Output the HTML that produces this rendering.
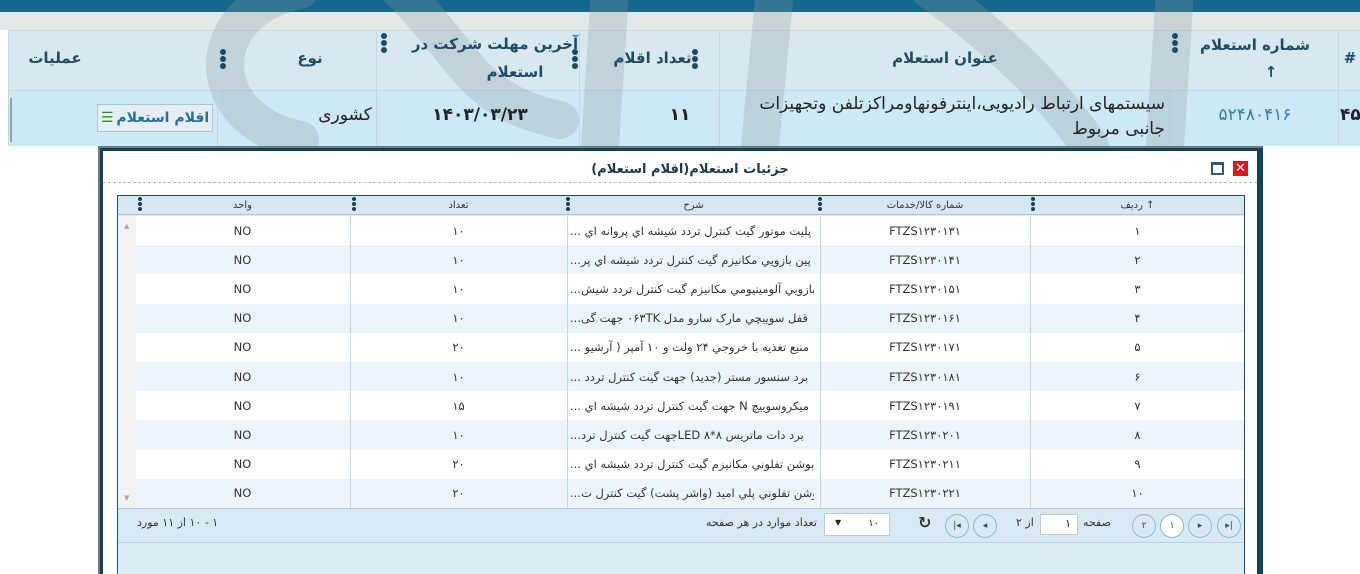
<!DOCTYPE html>
<html><head><meta charset="utf-8"><style>
*{margin:0;padding:0;box-sizing:border-box}
body{width:1360px;height:574px;overflow:hidden;background:#fff;font-family:"DejaVu Sans","Liberation Sans",sans-serif;position:relative;color:#222}
.a{position:absolute}
.c{position:absolute;display:flex;align-items:center;justify-content:center;text-align:center}
.dots{position:absolute;width:6px}
.dots i{display:block;width:6px;height:6px;border-radius:50%;background:#1c4a63;margin-bottom:1px}
.sd{position:absolute;width:4px}
.sd i{display:block;width:4px;height:4px;border-radius:50%;background:#1c3f55;margin-bottom:1px}
.hd{font-weight:bold;color:#1e4c66;font-size:15px}
.g{font-size:11.5px;color:#333}
.pb{position:absolute;width:24px;height:24px;border:1px solid #8fb7cf;border-radius:50%;display:flex;align-items:center;justify-content:center;font-size:9px;color:#345}
</style></head><body>
<!-- top bar -->
<div class="a" style="left:0;top:0;width:1360px;height:12px;background:#14678f"></div>
<div class="a" style="left:0;top:12px;width:1360px;height:18px;background:#e3e8eb"></div>
<!-- main header -->
<div class="a" style="left:8px;top:30px;width:1352px;height:60px;background:#d8e7f0;border-top:1px solid #cdd9e0"></div>
<div class="a" style="left:8px;top:90px;width:1352px;height:56px;background:#cde8f6;border-top:1px solid #c5d8e2"></div>
<!-- faint watermark -->
<svg class="a" style="left:0;top:0" width="1360" height="146" viewBox="0 0 1360 146">
<g fill="none" stroke="#8a9aa3" stroke-opacity="0.28" stroke-width="38" stroke-linecap="round">
<path d="M300 -10 C 200 10 200 120 300 140"/>
<path d="M400 -10 C 470 60 470 100 560 120"/>
<path d="M610 -10 L 600 146"/>
<path d="M775 -10 L 760 146"/>
<path d="M930 -10 C 1000 40 1050 90 1090 146"/>
<path d="M1175 -10 L 1165 146"/>
</g></svg>
<div class="a" style="left:8px;top:30px;width:1px;height:116px;background:#c8d6de"></div>
<div class="a" style="left:217px;top:30px;width:1px;height:116px;background:#c2d6e2"></div>
<div class="a" style="left:376px;top:30px;width:1px;height:116px;background:#c2d6e2"></div>
<div class="a" style="left:579px;top:30px;width:1px;height:116px;background:#c2d6e2"></div>
<div class="a" style="left:719px;top:30px;width:1px;height:116px;background:#c2d6e2"></div>
<div class="a" style="left:1174px;top:30px;width:1px;height:116px;background:#c2d6e2"></div>
<div class="a" style="left:1338px;top:30px;width:1px;height:116px;background:#c2d6e2"></div>
<div class="a" style="left:10px;top:98px;width:2px;height:44px;background:#8aa"></div>

<div class="c hd" style="left:1340px;top:40px;width:20px;height:35px">#</div>
<div class="c hd" style="left:1180px;top:32px;width:150px;height:26px">شماره استعلام</div>
<div class="c hd" style="left:1196px;top:62px;width:150px;height:20px">↑</div>
<div class="c hd" style="left:725px;top:45px;width:440px;height:26px">عنوان استعلام</div>
<div class="c hd" style="left:590px;top:45px;width:125px;height:26px">تعداد اقلام</div>
<div class="c hd" style="left:400px;top:32px;width:190px;height:24px">آخرین مهلت شرکت در</div>
<div class="c hd" style="left:380px;top:60px;width:270px;height:24px">استعلام</div>
<div class="c hd" style="left:240px;top:45px;width:140px;height:26px">نوع</div>
<div class="c hd" style="left:10px;top:45px;width:90px;height:26px">عملیات</div>
<div class="dots" style="left:1172px;top:33px"><i></i><i></i><i></i></div>
<div class="dots" style="left:692px;top:49px"><i></i><i></i><i></i></div>
<div class="dots" style="left:572px;top:49px"><i></i><i></i><i></i></div>
<div class="dots" style="left:381px;top:33px"><i></i><i></i><i></i></div>
<div class="dots" style="left:220px;top:49px"><i></i><i></i><i></i></div>

<div class="c" style="left:1340px;top:100px;width:30px;height:30px;font-size:17px;font-weight:bold;color:#223;justify-content:flex-start">۴۵</div>
<div class="c" style="left:1180px;top:100px;width:150px;height:30px;font-size:17px;color:#3a7fa8">۵۲۴۸۰۴۱۶</div>
<div class="a" style="left:725px;top:92px;width:440px;direction:rtl;font-size:17px;line-height:25px;color:#222">سیستمهای ارتباط رادیویی،اینترفونهاومراکزتلفن وتجهیزات جانبی مربوط</div>
<div class="c" style="left:580px;top:100px;width:200px;height:30px;font-size:17px;font-weight:bold;color:#222">۱۱</div>
<div class="c" style="left:380px;top:100px;width:200px;height:30px;font-size:17px;font-weight:bold;color:#222">۱۴۰۳/۰۳/۲۳</div>
<div class="c" style="left:290px;top:100px;width:110px;height:30px;font-size:17px;color:#222">کشوری</div>
<div class="c" style="left:97px;top:104px;width:116px;height:28px;border:1px solid #a9c4d3;background:#e4eef4;font-size:14px;font-weight:bold;color:#2a6f99"><span style="color:#2a8a2a;margin-right:3px">☰</span>اقلام استعلام</div>

<!-- modal -->
<div class="a" style="left:98px;top:146px;width:1165px;height:428px;background:#0f4359;border-left:2px solid #777;border-top:2px solid #777"></div>
<div class="a" style="left:103px;top:151px;width:1154px;height:423px;background:#fff"></div>
<div class="a" style="left:103px;top:182px;width:1154px;border-top:1px dashed #bbb"></div>
<div class="c" style="left:500px;top:158px;width:380px;height:22px;font-size:13px;font-weight:bold;color:#1e3a4c">جزئیات استعلام(اقلام استعلام)</div>
<div class="c" style="left:1233px;top:161px;width:15px;height:15px;background:#e0141c;color:#fff;font-size:13px;font-weight:bold">✕</div>
<div class="a" style="left:1211px;top:162px;width:13px;height:13px;border:2px solid #355a70;border-top-width:3px"></div>

<!-- grid -->
<div class="a" style="left:117px;top:195px;width:1128px;height:379px;border:1px solid #1d4b62;background:#dcebf4"></div>
<div class="a" style="left:118px;top:196px;width:1126px;height:19px;background:#d6e7f2;border-bottom:1px solid #a8c8dc"></div>
<div class="a" style="left:118px;top:216px;width:18px;height:292px;background:#f2f2f2"></div>
<div class="a" style="left:124px;top:222px;font-size:7px;color:#aaa">▲</div>
<div class="a" style="left:124px;top:494px;font-size:7px;color:#aaa">▼</div>
<div id="rows"></div>
<div class="a" style="left:118px;top:508px;width:1126px;height:35px;background:#d8e9f3;border-top:1px solid #a8c8dc;border-bottom:1px solid #b7d2e2"></div>
<div class="a" style="left:118px;top:544px;width:1126px;height:30px;background:#dceaf3"></div>

<div class="c g" style="left:1030px;top:196px;width:215px;height:19px;font-size:10px">ردیف ↑</div>
<div class="c g" style="left:820px;top:196px;width:210px;height:19px;font-size:10px">شماره کالا/خدمات</div>
<div class="c g" style="left:567px;top:196px;width:253px;height:19px;font-size:10px">شرح</div>
<div class="c g" style="left:350px;top:196px;width:217px;height:19px;font-size:10px">تعداد</div>
<div class="c g" style="left:135px;top:196px;width:215px;height:19px;font-size:10px">واحد</div>
<div class="sd" style="left:1031px;top:197px"><i></i><i></i><i></i></div>
<div class="sd" style="left:818px;top:197px"><i></i><i></i><i></i></div>
<div class="sd" style="left:566px;top:197px"><i></i><i></i><i></i></div>
<div class="sd" style="left:352px;top:197px"><i></i><i></i><i></i></div>
<div class="sd" style="left:138px;top:197px"><i></i><i></i><i></i></div>

<!-- pager -->
<div class="pb" style="left:1217px;top:514px">▸|</div>
<div class="pb" style="left:1188px;top:514px">▸</div>
<div class="pb" style="left:1160px;top:514px;background:#fff">۱</div>
<div class="pb" style="left:1132px;top:514px">۲</div>
<div class="a" style="left:1083px;top:516px;font-size:11px;color:#333">صفحه</div>
<div class="a" style="left:1040px;top:514px;width:38px;height:21px;background:#fff;border:1px solid #b9ccd8;font-size:11px;text-align:right;padding:2px 6px">۱</div>
<div class="a" style="left:1016px;top:516px;font-size:11px;color:#333">از ۲</div>
<div class="pb" style="left:973px;top:514px">◂</div>
<div class="pb" style="left:945px;top:514px">|◂</div>
<div class="a" style="left:918px;top:513px;font-size:16px;color:#333;font-weight:bold">↻</div>
<div class="a" style="left:824px;top:513px;width:66px;height:23px;background:#fff;border:1px solid #b9ccd8;font-size:10px">
<span style="position:absolute;right:10px;top:4px">۱۰</span><span style="position:absolute;left:10px;top:4px;font-size:8px">▼</span></div>
<div class="a" style="left:706px;top:516px;font-size:11px;color:#333;direction:rtl">تعداد موارد در هر صفحه</div>
<div class="a" style="left:137px;top:516px;font-size:11px;color:#333;direction:rtl">۱ - ۱۰ از ۱۱ مورد</div>

<script>
var d=[["۱","FTZS۱۲۳۰۱۳۱","پلیت موتور گیت کنترل تردد شیشه اي پروانه اي ...","۱۰"],
["۲","FTZS۱۲۳۰۱۴۱","پین بازویي مکانیزم گیت کنترل تردد شیشه اي پر...","۱۰"],
["۳","FTZS۱۲۳۰۱۵۱","بازویي آلومینیومي مکانیزم گیت کنترل تردد شیش...","۱۰"],
["۴","FTZS۱۲۳۰۱۶۱","قفل سوییچي مارک سارو مدل ۰۶۳TK جهت گی...","۱۰"],
["۵","FTZS۱۲۳۰۱۷۱","منبع تغذیه با خروجي ۲۴ ولت و ۱۰ آمپر ( آرشیو ...","۲۰"],
["۶","FTZS۱۲۳۰۱۸۱","برد سنسور مستر (جدید) جهت گیت کنترل تردد ...","۱۰"],
["۷","FTZS۱۲۳۰۱۹۱","میکروسوییچ N جهت گیت کنترل تردد شیشه اي ...","۱۵"],
["۸","FTZS۱۲۳۰۲۰۱","برد دات ماتریس ۸*۸ LEDجهت گیت کنترل ترد...","۱۰"],
["۹","FTZS۱۲۳۰۲۱۱","بوشن تفلوني مکانیزم گیت کنترل تردد شیشه اي ...","۲۰"],
["۱۰","FTZS۱۲۳۰۲۲۱","بوشن تفلوني پلي امید (واشر پشت) گیت کنترل ت...","۲۰"]];
var h="";
for(var i=0;i<10;i++){var t=216+i*29.2,bg=i%2?"#eef5fa":"#fff";
h+='<div class="a" style="left:136px;top:'+t+'px;width:1108px;height:29.2px;background:'+bg+'"></div>';
h+='<div class="c g" style="left:1030px;top:'+t+'px;width:215px;height:29px">'+d[i][0]+'</div>';
h+='<div class="c g" style="left:820px;top:'+t+'px;width:210px;height:29px">'+d[i][1]+'</div>';
h+='<div class="c g" style="left:570px;top:'+t+'px;width:244px;height:29px;justify-content:flex-end;direction:rtl;white-space:nowrap;overflow:hidden">'+d[i][2]+'</div>';
h+='<div class="c g" style="left:350px;top:'+t+'px;width:217px;height:29px">'+d[i][3]+'</div>';
h+='<div class="c g" style="left:135px;top:'+t+'px;width:215px;height:29px">NO</div>';}
[1030,820,567,350].forEach(function(x){h+='<div class="a" style="left:'+x+'px;top:216px;width:1px;height:292px;background:#c3d6e3"></div>'});
document.getElementById("rows").outerHTML=h;
</script>
</body></html>
